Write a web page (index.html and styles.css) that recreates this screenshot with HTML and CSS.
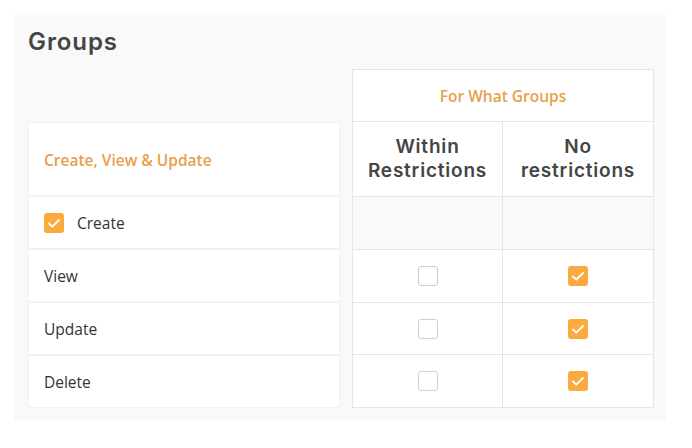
FILE: index.html
```html
<!DOCTYPE html>
<html>
<head>
<meta charset="utf-8">
<link rel="stylesheet" href="styles.css">
</head>
<body>
<div class="panel">
  <h2 class="title">Groups</h2>
  <div class="tables">
    <div class="left-table">
      <div class="lcell head">Create, View &amp; Update</div>
      <div class="lcell"><span class="cb on"><svg viewBox="0 0 20 20"><path d="M5 10.5l3.3 3.2L15 7" fill="none" stroke="#fff" stroke-width="1.8" stroke-linecap="round" stroke-linejoin="round"/></svg></span><span class="cb-label">Create</span></div>
      <div class="lcell">View</div>
      <div class="lcell">Update</div>
      <div class="lcell">Delete</div>
    </div>
    <div class="right-table">
      <div class="rcell span2 group-head">For What Groups</div>
      <div class="rcell col-head">Within Restrictions</div>
      <div class="rcell col-head">No restrictions</div>
      <div class="rcell blank"></div>
      <div class="rcell blank"></div>
      <div class="rcell"><span class="cb off"></span></div>
      <div class="rcell"><span class="cb on"><svg viewBox="0 0 20 20"><path d="M5 10.5l3.3 3.2L15 7" fill="none" stroke="#fff" stroke-width="1.8" stroke-linecap="round" stroke-linejoin="round"/></svg></span></div>
      <div class="rcell"><span class="cb off"></span></div>
      <div class="rcell"><span class="cb on"><svg viewBox="0 0 20 20"><path d="M5 10.5l3.3 3.2L15 7" fill="none" stroke="#fff" stroke-width="1.8" stroke-linecap="round" stroke-linejoin="round"/></svg></span></div>
      <div class="rcell"><span class="cb off"></span></div>
      <div class="rcell"><span class="cb on"><svg viewBox="0 0 20 20"><path d="M5 10.5l3.3 3.2L15 7" fill="none" stroke="#fff" stroke-width="1.8" stroke-linecap="round" stroke-linejoin="round"/></svg></span></div>
    </div>
  </div>
</div>
</body>
</html>
```
FILE: styles.css
```css
* { box-sizing: border-box; }
html, body { margin: 0; padding: 0; background: #ffffff; }
body { font-family: "Open Sans", "Liberation Sans", sans-serif; color: #333; }

.panel {
  margin: 15px 0 0 14px;
  width: 652px;
  height: 405px;
  background: #f9f9fa;
  padding: 0 12px 0 14px;
}
.title {
  margin: 0;
  padding-top: 12px;
  height: 54px;
  font-family: "Inter", "Liberation Sans", sans-serif;
  font-weight: 600;
  font-size: 24px;
  line-height: 30px;
  color: #454545;
  letter-spacing: 0.9px;
}
.tables {
  display: flex;
  align-items: flex-end;
  gap: 12px;
}
.left-table {
  width: 312px;
  background: #fff;
  border: 1px solid #edf2f8;
  display: flex;
  flex-direction: column;
}
.lcell {
  height: 53px;
  display: flex;
  align-items: center;
  padding-left: 15px;
  font-size: 15.5px;
  color: #333;
  border-top: 2px solid #edf3f9;
}
.lcell:first-child { border-top: none; }
.lcell.head {
  height: 72px;
  font-size: 15.5px;
  font-weight: 600;
  color: #e8a04d;
  padding-top: 2px;
}
.cb-label { margin-left: 13px; }

.right-table {
  width: 302px;
  display: grid;
  grid-template-columns: 1fr 1fr;
  grid-template-rows: 51px 75px 53px 53px 52px 53px;
  background: #fff;
  border: 1px solid #e3e6eb;
}
.rcell {
  display: flex;
  align-items: center;
  justify-content: center;
  border-top: 1px solid #e3e6eb;
}
.rcell:nth-child(2n) { border-right: 1px solid #e3e6eb; }
.rcell.span2 { grid-column: 1 / 3; border-top: none; border-right: none; }
.group-head {
  font-size: 15.5px;
  font-weight: 600;
  color: #e8a04d;
}
.col-head {
  font-family: "Inter", "Liberation Sans", sans-serif;
  font-weight: 600;
  font-size: 19px;
  line-height: 24px;
  color: #454545;
  text-align: center;
  letter-spacing: 0.8px;
  padding: 0 10px;
}
.blank { background: #f9f9fa; }

.cb {
  display: inline-block;
  width: 20px;
  height: 20px;
  border-radius: 3px;
}
.cb.on { background: #fbaa3f; }
.cb.on svg { display: block; width: 20px; height: 20px; }
.cb.off { border: 1px solid #cfcfcf; background: #fff; }
```
